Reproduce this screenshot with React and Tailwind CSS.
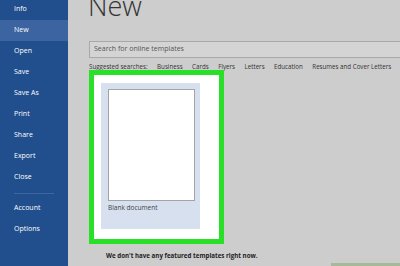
import React from "react";

const MENU_TOP = ["Info", "New", "Open", "Save", "Save As", "Print", "Share", "Export", "Close"];
const MENU_BOTTOM = ["Account", "Options"];
const SUGGESTED = ["Business", "Cards", "Flyers", "Letters", "Education", "Resumes and Cover Letters"];

function MenuItem({ label, active }) {
  return (
    <div
      className={
        "h-[21px] flex items-center pl-[14px] text-[7px] text-white " +
        (active ? "bg-[#3b64a0]" : "")
      }
    >
      {label}
    </div>
  );
}

export default function App() {
  return (
    <div
      className="w-[400px] h-[266px] overflow-hidden flex bg-[#cdcdcd]"
      style={{ fontFamily: "'Open Sans', 'Noto Sans', sans-serif" }}
    >
      {/* backstage sidebar */}
      <div className="w-[68px] shrink-0 bg-[#214e8c] flex flex-col">
        <div className="-mt-[1px]">
          {MENU_TOP.map((m) => (
            <MenuItem key={m} label={m} active={m === "New"} />
          ))}
        </div>
        <div className="mt-[5px] mb-[4px] mx-[14px] h-px bg-[#3d66a0]" />
        {MENU_BOTTOM.map((m) => (
          <MenuItem key={m} label={m} />
        ))}
      </div>

      {/* main */}
      <div className="flex-1 min-w-0 flex flex-col pl-[21px]">
        <div className="-mt-[8px] h-[27px] text-[27px] leading-none font-light text-[#333] -ml-[1px]">
          New
        </div>

        <div className="mt-[22px] h-[17px] -mr-[10px] border border-[#a8a8a8] bg-[#d4d4d4] flex items-center pl-[4px] text-[7px] text-[#555]">
          Search for online templates
        </div>

        <div className="mt-[4px] flex items-center gap-[9.5px] text-[6.2px] text-[#333] whitespace-nowrap h-[9px]">
          <span className="underline decoration-[#777]">Suggested searches:</span>
          {SUGGESTED.map((s) => (
            <span key={s}>{s}</span>
          ))}
        </div>

        <div className="-mt-[1px] w-[135px] h-[174px] border-[5px] border-[#27e027] bg-white pl-[7px] pt-[8px]">
          <div className="w-[99px] h-[146px] bg-[#d6e0ee] pl-[7px] pt-[6px]">
            <div className="w-[87px] h-[112px] bg-white border border-[#a4a4a4]" />
            <div className="mt-[2px] text-[6.5px] text-[#444]">Blank document</div>
          </div>
        </div>

        <div className="mt-[7px] pl-[17px] text-[6.2px] font-bold text-[#222] whitespace-nowrap">
          We don't have any featured templates right now.
        </div>

        <div className="mt-auto flex justify-end">
          <div className="w-[69px] h-[3px] bg-[#a6b998]" />
        </div>
      </div>
    </div>
  );
}
